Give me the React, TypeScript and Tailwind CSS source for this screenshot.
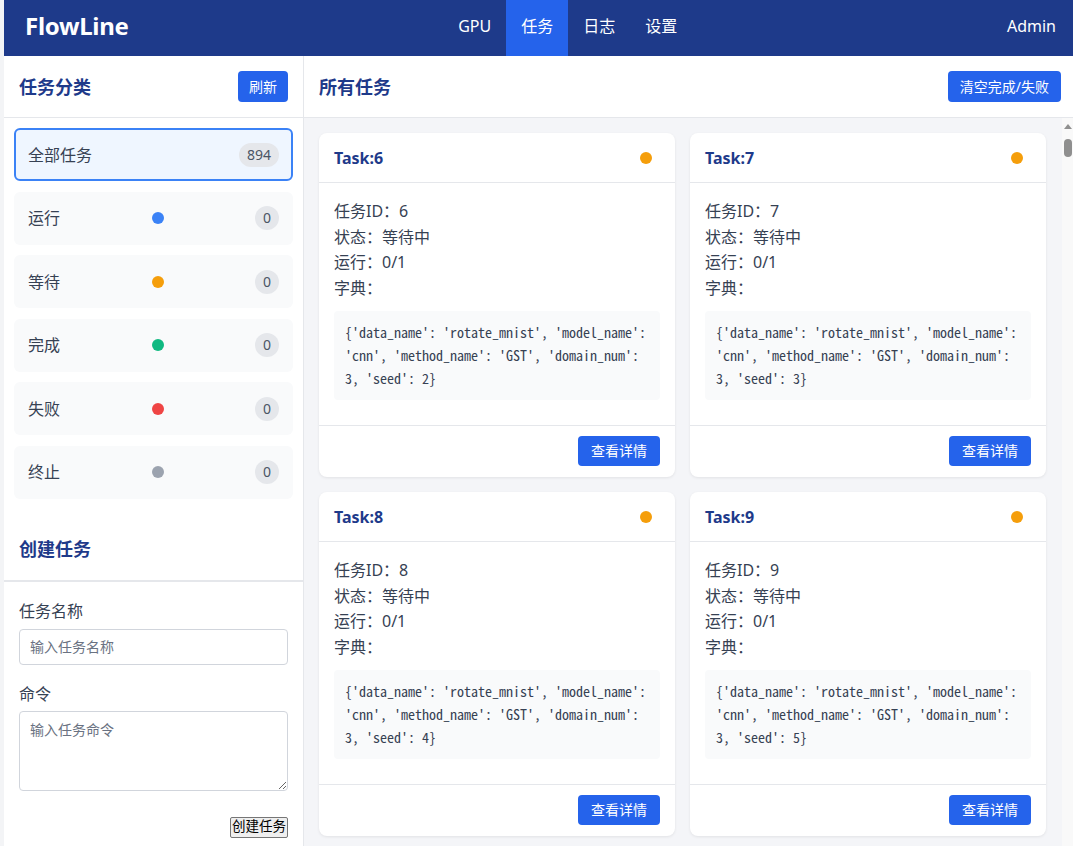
import React, { useState } from "react";

const categories = [
  { label: "全部任务", count: 894, dot: "" },
  { label: "运行", count: 0, dot: "bg-[#3b82f6]" },
  { label: "等待", count: 0, dot: "bg-[#f59e0b]" },
  { label: "完成", count: 0, dot: "bg-[#10b981]" },
  { label: "失败", count: 0, dot: "bg-[#ef4444]" },
  { label: "终止", count: 0, dot: "bg-[#9ca3af]" },
];

const tasks = [6, 7, 8, 9, 10, 11, 12, 13, 14, 15].map((id, i) => ({
  id,
  seed: i + 2,
}));

const TaskCard = ({ id, seed }: { id: number; seed: number }) => (
  <div className="bg-white rounded-lg shadow-[0_1px_3px_rgba(0,0,0,0.08)] flex flex-col">
    <div className="h-[50px] flex items-center justify-between pl-[15px] pr-[23px] border-b border-gray-200">
      <span className="text-base font-bold text-[#1e3a8a]">Task:{id}</span>
      <span className="w-3 h-3 rounded-full bg-[#f59e0b]" />
    </div>
    <div className="px-[15px] pt-4 pb-[25px] text-base leading-[25.5px] text-gray-700">
      <div>任务ID：{id}</div>
      <div>状态：等待中</div>
      <div>运行：0/1</div>
      <div>字典：</div>
      <div className="mt-[10px] bg-[#f9fafb] rounded px-[11px] py-[10px] font-['Noto_Sans_Mono_CJK_SC','Liberation_Mono',monospace] text-[14px] leading-[23px] text-gray-700">
        {`{'data_name': 'rotate_mnist', 'model_name': 'cnn', 'method_name': 'GST', 'domain_num': 3, 'seed': ${seed}}`}
      </div>
    </div>
    <div className="border-t border-gray-200 flex justify-end px-[15px] pt-[10px] pb-[11px]">
      <button className="h-[30px] px-[13px] rounded bg-[#2563eb] text-white text-sm">
        查看详情
      </button>
    </div>
  </div>
);

const App = () => {
  const [active, setActive] = useState(0);
  const nav = ["GPU", "任务", "日志", "设置"];

  return (
    <div className="h-screen pl-1 bg-gray-100 font-['Noto_Sans','Noto_Sans_CJK_SC',sans-serif]">
      <div className="h-full flex flex-col bg-white">
        <header className="h-[56px] shrink-0 bg-[#1e3a8a] flex items-center justify-between pl-[21px] pr-[17px] text-white">
          <div className="text-[24px] font-bold tracking-[-0.3px] pb-1">FlowLine</div>
          <nav className="flex h-full">
            {nav.map((n, i) => (
              <a
                key={n}
                className={`h-full flex items-center px-[15px] pb-1 text-base ${
                  i === 1 ? "bg-[#2563eb]" : ""
                }`}
              >
                {n}
              </a>
            ))}
          </nav>
          <div className="text-base pb-1">Admin</div>
        </header>

        <div className="flex-1 flex min-h-0">
          <aside className="w-[300px] shrink-0 bg-white border-r border-gray-200 flex flex-col overflow-hidden">
            <div className="h-[62px] shrink-0 flex items-center justify-between px-[15px] border-b border-gray-200">
              <h2 className="text-lg font-bold text-[#1e3a8a]">任务分类</h2>
              <button className="h-[31px] px-[11px] rounded bg-[#2563eb] text-white text-sm">
                刷新
              </button>
            </div>
            <div className="p-[10px] flex flex-col gap-[10.5px]">
              {categories.map((c, i) => (
                <div
                  key={c.label}
                  onClick={() => setActive(i)}
                  className={`h-[53px] flex items-center justify-between px-3 rounded-md border-2 cursor-pointer ${
                    active === i
                      ? "bg-[#eff6ff] border-[#3b82f6]"
                      : "bg-[#f9fafb] border-transparent"
                  }`}
                >
                  <span className="text-base text-gray-700">{c.label}</span>
                  {c.dot && <span className={`w-3 h-3 rounded-full ${c.dot}`} />}
                  <span
                    className={`h-6 rounded-full bg-gray-200 text-sm text-gray-600 flex items-center justify-center ${
                      c.count > 9 ? "px-2" : "w-6"
                    }`}
                  >
                    {c.count}
                  </span>
                </div>
              ))}
            </div>
            <div className="px-[15px] pt-[27px] pb-[17px] border-b-2 border-gray-200">
              <h2 className="text-lg font-bold text-[#1e3a8a] leading-[27px]">创建任务</h2>
            </div>
            <div className="px-[15px] pt-[17px] flex flex-col">
              <label className="text-base text-gray-700 leading-6 mb-[6px]">任务名称</label>
              <input
                placeholder="输入任务名称"
                className="h-9 border border-gray-300 rounded px-[10px] text-sm placeholder:text-gray-500 mb-[17px]"
              />
              <label className="text-base text-gray-700 leading-6 mb-[5px]">命令</label>
              <textarea
                placeholder="输入任务命令"
                className="h-[80px] border border-gray-300 rounded px-[10px] py-[8px] text-sm placeholder:text-gray-500"
              />
              <div className="flex justify-end mt-[26px]">
                <button className="h-[21px] px-[1px] border border-[#767676] rounded-[2px] bg-[#efefef] text-[13.5px] leading-none text-black">
                  创建任务
                </button>
              </div>
            </div>
          </aside>

          <main className="flex-1 min-w-0 flex flex-col">
            <div className="h-[62px] shrink-0 flex items-center justify-between pl-[15px] pr-3 border-b border-gray-200">
              <h2 className="text-lg font-bold text-[#1e3a8a]">所有任务</h2>
              <button className="h-[31px] px-3 rounded bg-[#2563eb] text-white text-sm">
                清空完成/失败
              </button>
            </div>
            <div className="flex-1 min-h-0 relative">
              <div className="h-full overflow-y-auto bg-[#f4f5f8] pl-[15px] pr-[27px] py-[15px] [scrollbar-width:none]">
                <div className="grid grid-cols-2 gap-[15px]">
                  {tasks.map((t) => (
                    <TaskCard key={t.id} id={t.id} seed={t.seed} />
                  ))}
                </div>
              </div>
              <div className="absolute right-0 top-0 bottom-0 w-[11px] bg-[#f9f9f9] flex flex-col items-center pt-[6px]">
                <span className="w-0 h-0 border-l-[4px] border-r-[4px] border-b-[5px] border-l-transparent border-r-transparent border-b-[#909090]" />
                <span className="mt-[10px] w-[8px] h-[18px] rounded-full bg-[#8f8f8f]" />
              </div>
            </div>
          </main>
        </div>
      </div>
    </div>
  );
};

export default App;
